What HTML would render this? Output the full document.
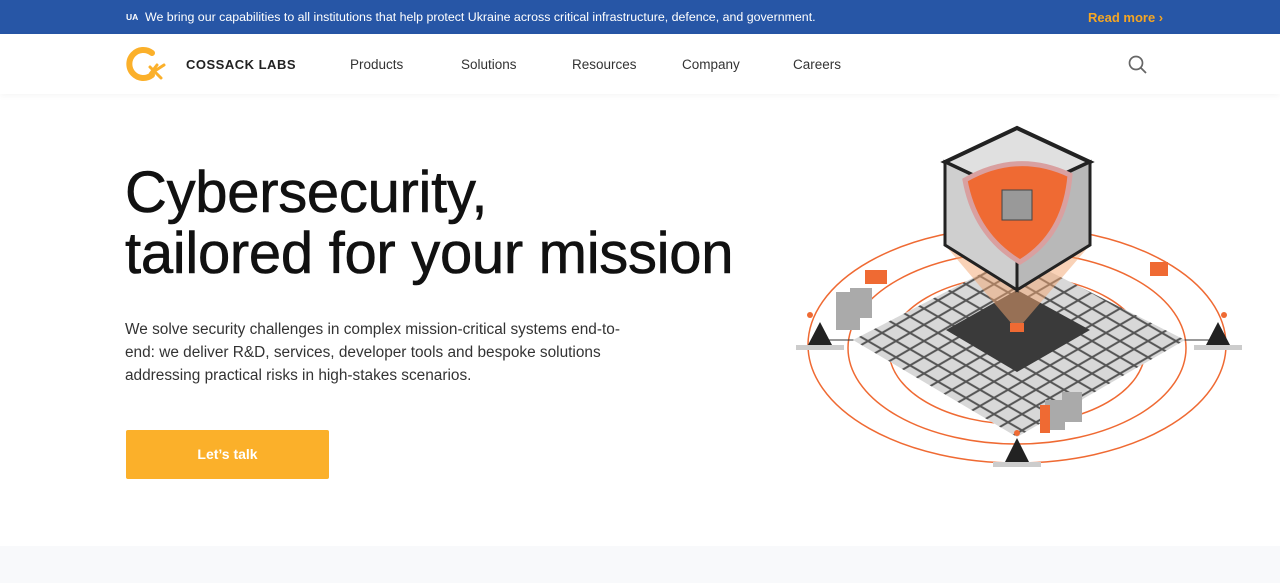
<!DOCTYPE html>
<html><head><meta charset="utf-8"><style>
*{margin:0;padding:0;box-sizing:border-box}
body{width:1280px;height:583px;overflow:hidden;background:#fff;font-family:"Liberation Sans",sans-serif;position:relative}
.top{position:absolute;left:0;top:0;width:1280px;height:34px;background:#2756a6;color:#fff;font-size:12.4px}
.top .ua{position:absolute;left:126px;top:12px;font-size:8.5px;font-weight:bold}
.top .msg{position:absolute;left:145px;top:10px;white-space:nowrap}
.top .rm{position:absolute;left:1088px;top:10px;color:#f5a623;font-weight:bold;font-size:13px}
.nav{position:absolute;top:34px;left:0;width:1280px;height:60px;background:#fff;box-shadow:0 2px 6px rgba(0,0,0,.04)}
.brand{position:absolute;left:186px;top:23px;font-weight:bold;font-size:13px;letter-spacing:.5px;color:#222}
.nav a{position:absolute;top:23px;font-size:13.5px;color:#333;text-decoration:none}
h1{position:absolute;left:125px;top:162px;font-size:58px;line-height:61px;font-weight:normal;color:#111;letter-spacing:-.3px;white-space:nowrap;-webkit-text-stroke:.6px #111}
p{position:absolute;left:125px;top:318px;font-size:15.4px;line-height:23px;color:#333;white-space:nowrap}
.btn{position:absolute;left:126px;top:430px;width:203px;height:49px;background:#fbb02a;border-radius:2px;color:#fff;font-weight:bold;font-size:14px;text-align:center;line-height:49px}
.foot{position:absolute;left:0;top:546px;width:1280px;height:37px;background:#f8f9fb}
</style></head><body>
<div class="top"><span class="ua">UA</span><span class="msg">We bring our capabilities to all institutions that help protect Ukraine across critical infrastructure, defence, and government.</span><span class="rm">Read more &#8250;</span></div>
<div class="nav">
<svg style="position:absolute;left:124px;top:11px" width="44" height="38" viewBox="0 0 44 38"><path d="M28 8 A14 14 0 1 0 28 30" fill="none" stroke="#fbb02a" stroke-width="6" stroke-linecap="round"/><path d="M26 22 L37 33 M33 20 L26 29 L40 20" fill="none" stroke="#fbb02a" stroke-width="3" stroke-linecap="round"/></svg>
<span class="brand">COSSACK LABS</span>
<a style="left:350px">Products</a><a style="left:461px">Solutions</a><a style="left:572px">Resources</a><a style="left:682px">Company</a><a style="left:793px">Careers</a>
<svg style="position:absolute;left:1128px;top:21px" width="20" height="20" viewBox="0 0 20 20"><circle cx="8" cy="8" r="6.5" fill="none" stroke="#666" stroke-width="1.7"/><path d="M13 13 L18 18" stroke="#666" stroke-width="1.8"/></svg>
</div>
<h1>Cybersecurity,<br>tailored for your mission</h1>
<p>We solve security challenges in complex mission-critical systems end-to-<br>end: we deliver R&amp;D, services, developer tools and bespoke solutions<br>addressing practical risks in high-stakes scenarios.</p>
<div class="btn">Let’s talk</div>
<svg style="position:absolute;left:780px;top:120px" width="480" height="360" viewBox="780 120 480 360">
<defs><pattern id="t" width="14" height="14" patternUnits="userSpaceOnUse" patternTransform="matrix(1,0.58,-1,0.58,0,0)"><rect width="14" height="14" fill="#555"/><rect x="1" y="1" width="12" height="12" fill="#d8d8d8"/></pattern></defs>
<ellipse cx="1017" cy="345" rx="209" ry="118" fill="none" stroke="#ef6a33" stroke-width="1.5"/>
<ellipse cx="1017" cy="348" rx="169" ry="96" fill="none" stroke="#ef6a33" stroke-width="1.5"/>
<ellipse cx="1017" cy="350" rx="128" ry="74" fill="none" stroke="#ef6a33" stroke-width="1.5"/>
<line x1="825" y1="340" x2="1210" y2="340" stroke="#333" stroke-width="1"/>
<polygon points="1017,255 1185,340 1017,437 853,340" fill="url(#t)"/>
<polygon points="1017,290 1090,330 1017,372 946,330" fill="#3a3a3a"/>
<polygon points="945,245 1017,290 1090,245 1017,330" fill="#f3a56f" opacity=".5"/>
<rect x="1010" y="323" width="14" height="9" fill="#ef6a33"/>
<polygon points="1017,128 1090,162 1017,196 945,162" fill="#e0e0e0" stroke="#222" stroke-width="4"/>
<polygon points="945,162 1017,196 1017,290 945,245" fill="#cfcfcf" stroke="#222" stroke-width="3"/>
<polygon points="1090,162 1017,196 1017,290 1090,245" fill="#b8b8b8" stroke="#222" stroke-width="3"/>
<path d="M965 180 Q1017 150 1070 175 Q1065 235 1020 262 Q975 235 965 180Z" fill="#ef6a33" stroke="#d9a0a0" stroke-width="5"/>
<rect x="1002" y="190" width="30" height="30" fill="#999" stroke="#444"/>
<g fill="#aaa"><rect x="836" y="292" width="24" height="38"/><rect x="850" y="288" width="22" height="30"/><rect x="1045" y="400" width="20" height="30"/><rect x="1062" y="392" width="20" height="30"/></g>
<rect x="1040" y="405" width="10" height="28" fill="#ef6a33"/>
<rect x="865" y="270" width="22" height="14" fill="#ef6a33"/><rect x="1150" y="262" width="18" height="14" fill="#ef6a33"/>
<g fill="#222"><polygon points="808,345 820,322 832,345"/><polygon points="1206,345 1218,322 1230,345"/><polygon points="1005,462 1017,438 1029,462"/></g>
<g fill="#ccc"><rect x="796" y="345" width="48" height="5"/><rect x="1194" y="345" width="48" height="5"/><rect x="993" y="462" width="48" height="5"/></g>
<g fill="#ef6a33"><circle cx="810" cy="315" r="3"/><circle cx="1224" cy="315" r="3"/><circle cx="1017" cy="433" r="3"/></g>
</svg>
<div class="foot"></div>
</body></html>
